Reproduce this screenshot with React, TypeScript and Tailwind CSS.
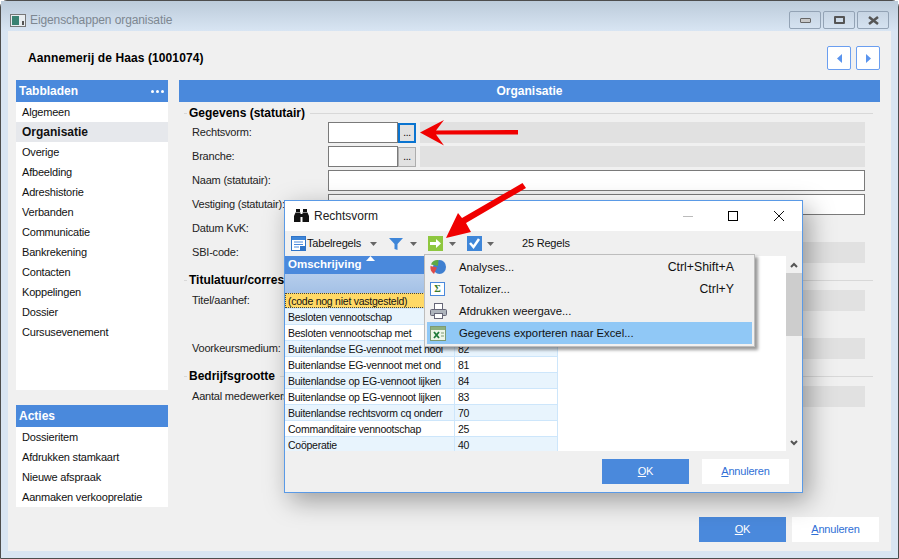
const font = "font-['Liberation_Sans',sans-serif]";

const tabs = [
  "Algemeen",
  "Organisatie",
  "Overige",
  "Afbeelding",
  "Adreshistorie",
  "Verbanden",
  "Communicatie",
  "Bankrekening",
  "Contacten",
  "Koppelingen",
  "Dossier",
  "Cursusevenement",
];

const acties = ["Dossieritem", "Afdrukken stamkaart", "Nieuwe afspraak", "Aanmaken verkooprelatie"];

const rows = [
  ["(code nog niet vastgesteld)", ""],
  ["Besloten vennootschap", ""],
  ["Besloten vennootschap met", ""],
  ["Buitenlandse EG-vennoot met hool", "82"],
  ["Buitenlandse EG-vennoot met ond", "81"],
  ["Buitenlandse op EG-vennoot lijken", "84"],
  ["Buitenlandse op EG-vennoot lijken", "83"],
  ["Buitenlandse rechtsvorm cq onderr", "70"],
  ["Commanditaire vennootschap", "25"],
  ["Coöperatie", "40"],
];

function Label({ children }: { children: React.ReactNode }) {
  return <div className="w-[144px] shrink-0 pl-[8px] whitespace-nowrap overflow-hidden text-[#222]">{children}</div>;
}

function Section({ title }: { title: string }) {
  return (
    <div className="flex items-center h-[16px]">
      <div className="w-[3px] h-px bg-[#d8d8d8]" />
      <div className="font-bold text-[12px] tracking-normal px-[2px] text-black whitespace-nowrap">{title}</div>
      <div className="flex-1 h-px bg-[#d8d8d8] ml-[3px] mr-[7px]" />
    </div>
  );
}

function Input({ w }: { w: string }) {
  return <div className={`${w} h-[21px] bg-white border border-[#7a7a7a] shrink-0`} />;
}

function Grey() {
  return <div className="flex-1 h-[21px] bg-[#e1e1e1]" />;
}

function Panel({ title, items, dots, grow }: { title: string; items: string[]; dots?: boolean; grow?: boolean }) {
  return (
    <div className={`w-[152px] flex flex-col ${grow ? "h-[310px]" : ""}`}>
      <div className="h-[22px] bg-[#4a89dc] flex items-center justify-between pl-[3px] pr-[4px] text-white font-bold text-[12px] tracking-normal">
        <span>{title}</span>
        {dots && (
          <span className="flex gap-[2px]">
            <i className="w-[3px] h-[3px] rounded-full bg-white" />
            <i className="w-[3px] h-[3px] rounded-full bg-white" />
            <i className="w-[3px] h-[3px] rounded-full bg-white" />
          </span>
        )}
      </div>
      <div className="flex-1 bg-white">
        {items.map((t) => (
          <div key={t} className={`h-[20px] flex items-center pl-[6px] text-[#111] ${t === "Organisatie" ? "bg-[#e6e8ec] font-bold text-[12px] tracking-normal" : ""}`}>
            {t}
          </div>
        ))}
      </div>
    </div>
  );
}

function Btn({ primary, children }: { primary?: boolean; children: React.ReactNode }) {
  return (
    <div className={`w-[87px] h-[25px] flex items-center justify-center ${primary ? "bg-[#4a89dc] text-white" : "bg-white text-[#2f6fd6]"}`}>
      {children}
    </div>
  );
}

function Caret() {
  return <svg className="block" width="7" height="4" viewBox="0 0 7 4"><path d="M0 0h7L3.5 4z" fill="#666" /></svg>;
}

function MenuRow({ icon, label, keys, active }: { icon: React.ReactNode; label: string; keys?: string; active?: boolean }) {
  return (
    <div className={`h-[22px] flex items-center pr-[18px] tracking-normal ${active ? "bg-[#90c8f6]" : ""}`}>
      <div className="w-[32px] pl-[3px] flex justify-start">{icon}</div>
      <div className="flex-1 text-[#111] text-[11.3px]">{label}</div>
      {keys && <div className="text-[#111] text-[12.3px]">{keys}</div>}
    </div>
  );
}

function Dialog() {
  return (
    <div className="absolute left-[284px] top-[200px] w-[519px] h-[293px] bg-[#f0f0f0] border border-[#5a9ae6] shadow-[6px_8px_24px_rgba(0,0,0,0.35)] flex flex-col">
      <div className="h-[30px] bg-white flex items-center pl-[9px] shrink-0">
        <svg width="15" height="14" viewBox="0 0 15 14" fill="#111">
          <rect x="2" y="0" width="4" height="3" />
          <rect x="9" y="0" width="4" height="3" />
          <path d="M1.5 3.5h5V13H0V7z" />
          <path d="M8.500 3.5h5L15 7v6H8.500z" />
          <rect x="6" y="5" width="3" height="3" />
        </svg>
        <span className="ml-[5px] text-[12px] tracking-normal text-[#222]">Rechtsvorm</span>
        <div className="ml-auto flex items-center pr-[18px]">
          <div className="w-[10px] h-px bg-[#bbb] mr-[35px]" />
          <div className="w-[10px] h-[10px] border border-black mr-[36px]" />
          <svg width="10" height="10" viewBox="0 0 10 10"><path d="M0 0l10 10M10 0L0 10" stroke="#111" strokeWidth="1" /></svg>
        </div>
      </div>
      <div className="h-[25px] flex items-center pl-[6px] shrink-0 text-[#111]">
        <svg width="15" height="15" viewBox="0 0 15 15">
          <rect x=".5" y=".5" width="14" height="14" fill="#fff" stroke="#2f74c8" />
          <rect x="1" y="1" width="13" height="3" fill="#3f86d8" />
          <path d="M3 6h9M3 8.500h9M3 11h5" stroke="#4a89dc" />
          <rect x="9" y="10" width="5" height="4" fill="#2f74c8" />
        </svg>
        <span className="ml-[1px] w-[56px] whitespace-nowrap">Tabelregels</span>
        <span className="ml-[7px]"><Caret /></span>
        <svg className="ml-[12px]" width="14" height="14" viewBox="0 0 14 14"><path d="M0 1h14L8.500 7v6l-3-1V7z" fill="#3f86d8" /></svg>
        <span className="ml-[7px]"><Caret /></span>
        <svg className="ml-[11px]" width="15" height="15" viewBox="0 0 15 15"><rect width="15" height="15" fill="#8ec73f" /><path d="M2 6h6V3l5 4.500L8 12V9H2z" fill="#fff" /></svg>
        <span className="ml-[6px]"><Caret /></span>
        <svg className="ml-[11px]" width="15" height="15" viewBox="0 0 15 15"><rect width="15" height="15" fill="#3f86d8" /><path d="M3 7l3.500 4L12 3" fill="none" stroke="#fff" strokeWidth="2.500" /></svg>
        <span className="ml-[5px]"><Caret /></span>
        <span className="ml-[28px]">25 Regels</span>
      </div>
      <div className="h-[195px] flex shrink-0">
        <div className="flex-1 bg-white overflow-hidden">
          <div className="relative w-[273px] h-[18px] bg-[#4a89dc] text-white font-bold text-[11.5px] tracking-normal flex items-center pl-[3px]">
            Omschrijving
            <svg className="absolute left-[81px] top-0" width="9" height="5" viewBox="0 0 9 5"><path d="M4.500 0L9 5H0z" fill="#fff" /></svg>
          </div>
          <div className="w-[273px] h-[19px] bg-gradient-to-b from-[#b5cdec] to-[#a4c1e6]" />
          {rows.map(([a, b], i) => (
            <div key={i} className={`flex h-[16px] w-[273px] overflow-hidden border-b border-[#cde6fb] text-[10.5px] tracking-[-0.25px] ${i % 2 === 1 ? "bg-[#e8f4fd]" : "bg-white"}`}>
              <div className={`w-[170px] border-r border-[#cde6fb] pl-[3px] overflow-hidden whitespace-nowrap leading-[16px] text-[#111] ${i === 0 ? "bg-[#ffd966] outline-1 outline-dotted outline-[#444] -outline-offset-1" : ""}`}>{a}</div>
              <div className="flex-1 border-r border-[#cde6fb] pl-[3px] leading-[16px] text-[#111]">{b}</div>
            </div>
          ))}
        </div>
        <div className="w-[16px] flex flex-col items-center justify-between">
          <div className="h-[17px] flex items-center">
            <svg width="8" height="6" viewBox="0 0 8 6"><path d="M1 5l3-3 3 3" fill="none" stroke="#555" strokeWidth="2" /></svg>
          </div>
          <div className="w-full h-[63px] bg-[#cdcdcd] mb-auto" />
          <div className="h-[17px] flex items-center">
            <svg width="8" height="6" viewBox="0 0 8 6"><path d="M1 1l3 3 3-3" fill="none" stroke="#555" strokeWidth="2" /></svg>
          </div>
        </div>
      </div>
      <div className="flex-1 flex justify-end items-start gap-[13px] pt-[8px] pr-[13px]">
        <Btn primary><span><u>O</u>K</span></Btn>
        <Btn><span><u>A</u>nnuleren</span></Btn>
      </div>
    </div>
  );
}

function ExportMenu() {
  return (
    <div className="absolute left-[424px] top-[254px] w-[331px] h-[93px] bg-[#f0f0f0] border border-[#bdbdbd] px-[2px] pt-px shadow-[3px_3px_3px_rgba(0,0,0,0.4)]">
      <MenuRow
        label="Analyses..."
        keys="Ctrl+Shift+A"
        icon={
          <svg width="16" height="16" viewBox="0 0 16 16">
            <ellipse cx="9.500" cy="8" rx="6.500" ry="7" fill="#3f7fd0" />
            <path d="M8 7L1 5.500C2 2 5 .5 8.500 1z" fill="#5fa845" />
            <path d="M7 8.500L.5 7c-.5 3 .5 6 3.500 8z" fill="#dd4a4a" />
          </svg>
        }
      />
      <MenuRow
        label="Totalizer..."
        keys="Ctrl+Y"
        icon={
          <div className="w-[15px] h-[14px] bg-white border border-[#4a89dc] flex items-center justify-center text-[10px] font-bold leading-none text-[#3a7a2a] font-['Liberation_Serif',serif]">
            Σ
          </div>
        }
      />
      <MenuRow
        label="Afdrukken weergave..."
        icon={
          <svg width="17" height="16" viewBox="0 0 17 16">
            <rect x="4.500" y=".5" width="8" height="7" fill="#fff" stroke="#667" />
            <rect x=".5" y="6.500" width="16" height="6" rx="1" fill="#aeb4bc" stroke="#667" />
            <rect x="4.500" y="10.500" width="8" height="5" fill="#fff" stroke="#667" />
          </svg>
        }
      />
      <MenuRow
        active
        label="Gegevens exporteren naar Excel..."
        icon={
          <svg width="16" height="15" viewBox="0 0 16 15">
            <rect x=".5" y=".5" width="15" height="14" fill="#eef5e8" stroke="#7c9a72" />
            <rect x="1" y="1" width="14" height="3" fill="#8db07e" />
            <path d="M4 6l5 6M9 6l-5 6" stroke="#1f7a3a" strokeWidth="1.800" />
            <path d="M11 7h3M11 10h3" stroke="#7c9a72" />
          </svg>
        }
      />
    </div>
  );
}

export default function App() {
  return (
    <div className={`${font} relative w-[899px] h-[559px] bg-white text-[11px] tracking-[-0.2px] overflow-hidden`}>
      <div className="w-full h-full rounded-t-[7px] border border-[#4d4d4d] flex flex-col bg-[#d9e5f2]">
        <div className="h-[30px] shrink-0 bg-gradient-to-b from-[#bccbda] to-[#d8e5f3] flex items-center pl-[9px] pt-[8px]">
          <svg width="16" height="13" viewBox="0 0 16 13">
            <rect x=".5" y=".5" width="15" height="12" fill="#e8edf0" stroke="#777" />
            <rect x="2" y="2" width="7" height="9" fill="#3a8272" />
            <rect x="12" y="7" width="2" height="4" fill="#555" />
          </svg>
          <span className="ml-[4px] text-[12px] tracking-[-0.1px] text-[#7d8791]">Eigenschappen organisatie</span>
          <div className="ml-auto flex gap-[2px] pr-[9px]">
            <div className="w-[32px] h-[18px] border border-[#93a3b5] rounded-[2px] flex items-center justify-center">
              <div className="w-[11px] h-[5px] bg-[#c8c8c8] border border-[#666] rounded-[1px]" />
            </div>
            <div className="w-[32px] h-[18px] border border-[#93a3b5] rounded-[2px] flex items-center justify-center">
              <div className="w-[11px] h-[8px] border-2 border-[#555] rounded-[1px]" />
            </div>
            <div className="w-[32px] h-[18px] border border-[#93a3b5] rounded-[2px] flex items-center justify-center">
              <svg width="11" height="9" viewBox="0 0 11 9"><path d="M1 1l9 7M10 1L1 8" stroke="#555" strokeWidth="2.500" /></svg>
            </div>
          </div>
        </div>
        <div className="flex-1 mx-[7px] mb-[7px] bg-[#f0f0f0] flex flex-col">
          <div className="h-[49px] shrink-0 flex items-center pl-[20px] pr-[11px]">
            <span className="font-bold text-[12px] tracking-[0.1px] text-black mt-[5px]">Aannemerij de Haas (1001074)</span>
            <div className="ml-auto flex gap-[5px] mt-[5px]">
              <div className="w-[24px] h-[24px] bg-white border border-[#6a9ef0] rounded-[2px] flex items-center justify-center">
                <svg width="5" height="9" viewBox="0 0 5 9"><path d="M5 0v9L0 4.500z" fill="#5a94ee" /></svg>
              </div>
              <div className="w-[24px] h-[24px] bg-white border border-[#6a9ef0] rounded-[2px] flex items-center justify-center">
                <svg width="5" height="9" viewBox="0 0 5 9"><path d="M0 0v9l5-4.500z" fill="#5a94ee" /></svg>
              </div>
            </div>
          </div>
          <div className="flex flex-1 pl-[8px] pr-[11px]">
            <div className="w-[152px] flex flex-col gap-[15px] shrink-0">
              <Panel title="Tabbladen" items={tabs} dots grow />
              <Panel title="Acties" items={acties} />
            </div>
            <div className="flex-1 ml-[11px] flex flex-col">
              <div className="h-[22px] bg-[#4a89dc] flex items-center justify-center text-white font-bold text-[12px] tracking-normal">Organisatie</div>
              <div className="flex flex-col pt-[3px] pl-[5px]">
                <Section title="Gegevens (statutair)" />
                <div className="flex flex-col gap-[3px] pt-[1px] pr-[15px]">
                  <div className="flex items-center h-[21px]">
                    <Label>Rechtsvorm:</Label>
                    <Input w="w-[70px]" />
                    <div className="w-[18px] h-[20px] mr-[4px] bg-[#e1e1e1] border-2 border-[#0a74d0] flex items-center justify-center text-[10px] leading-none">...</div>
                    <Grey />
                  </div>
                  <div className="flex items-center h-[21px]">
                    <Label>Branche:</Label>
                    <Input w="w-[70px]" />
                    <div className="w-[18px] h-[20px] mr-[4px] bg-[#e1e1e1] border border-[#adadad] flex items-center justify-center text-[10px] leading-none">...</div>
                    <Grey />
                  </div>
                  <div className="flex items-center h-[21px]"><Label>Naam (statutair):</Label><Input w="flex-1" /></div>
                  <div className="flex items-center h-[21px]"><Label>Vestiging (statutair):</Label><Input w="flex-1" /></div>
                  <div className="flex items-center h-[21px]"><Label>Datum KvK:</Label></div>
                  <div className="flex items-center h-[21px]"><Label>SBI-code:</Label><Grey /></div>
                </div>
                <div className="pt-[9px]"><Section title="Titulatuur/correspondentie" /></div>
                <div className="flex flex-col gap-[3px] pt-[2px] pr-[15px]">
                  <div className="flex items-center h-[21px]"><Label>Titel/aanhef:</Label><Grey /></div>
                  <div className="h-[21px]" />
                  <div className="flex items-center h-[21px]"><Label>Voorkeursmedium:</Label><Grey /></div>
                </div>
                <div className="pt-[9px]"><Section title="Bedrijfsgrootte" /></div>
                <div className="flex items-center h-[21px] mt-[2px] pr-[15px]"><Label>Aantal medewerkers:</Label><Grey /></div>
              </div>
              <div className="mt-auto mb-[9px] mr-px flex justify-end gap-[6px]">
                <Btn primary><span><u>O</u>K</span></Btn>
                <Btn><span><u>A</u>nnuleren</span></Btn>
              </div>
            </div>
          </div>
        </div>
      </div>
      <Dialog />
      <ExportMenu />
      <svg className="absolute left-0 top-0 pointer-events-none" width="899" height="559" viewBox="0 0 899 559">
        <path d="M518 130v4.500H436l8 11-24-13 24-12.500-8 10.500z" fill="#f00000" />
        <path d="M522.500 183l3.500 5-60 35 5 9-25 6 12-25 4 5z" fill="#f00000" />
      </svg>
    </div>
  );
}
